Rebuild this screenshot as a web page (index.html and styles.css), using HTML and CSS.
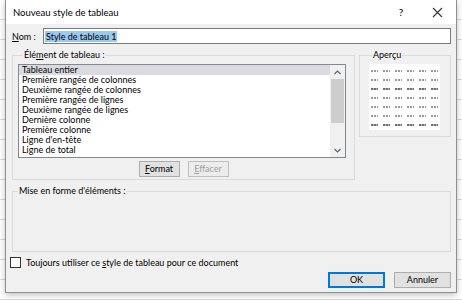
FILE: index.html
```html
<!DOCTYPE html>
<html lang="fr">
<head>
  <meta charset="UTF-8">
  <title>Nouveau style de tableau</title>
  <link rel="stylesheet" href="styles.css">
</head>
<body>

  <div class="dialog">
    <!-- Title bar -->
    <div class="titlebar">
      <span class="title">Nouveau style de tableau</span>
      <span class="help">?</span>
      <span class="close">
        <svg width="11" height="11" viewBox="0 0 11 11"><path d="M1 1 L10 10 M10 1 L1 10" stroke="#333" stroke-width="1.1" fill="none"/></svg>
      </span>
    </div>

    <div class="content">
      <!-- Name -->
      <div class="name-row">
        <span class="label"><u>N</u>om :</span>
        <div class="textbox"><span class="selected-text">Style de tableau 1</span></div>
      </div>

      <div class="top-row">
        <!-- Table elements -->
        <fieldset class="group elements">
          <legend>Élé<u>m</u>ent de tableau :</legend>
          <div class="listbox">
            <ul class="items" id="items"></ul>
            <div class="scrollbar">
              <svg class="arrow" width="7" height="5" viewBox="0 0 7 5"><path d="M0.5 4 L3.5 1 L6.5 4" stroke="#606060" stroke-width="1.1" fill="none"/></svg>
              <div class="thumb"></div>
              <svg class="arrow down" width="7" height="5" viewBox="0 0 7 5"><path d="M0.5 1 L3.5 4 L6.5 1" stroke="#606060" stroke-width="1.1" fill="none"/></svg>
            </div>
          </div>
          <div class="list-buttons">
            <button class="btn"><u>F</u>ormat</button>
            <button class="btn disabled"><u>E</u>ffacer</button>
          </div>
        </fieldset>

        <!-- Preview -->
        <fieldset class="group preview">
          <legend>Aperçu</legend>
          <div class="preview-box" id="preview"></div>
        </fieldset>
      </div>

      <fieldset class="group formatting">
        <legend>Mise en forme d'éléments :</legend>
      </fieldset>

      <label class="check">
        <span class="checkbox"></span>
        <span>Toujours utiliser ce <u>s</u>tyle de tableau pour ce document</span>
      </label>

      <div class="actions">
        <button class="btn default">OK</button>
        <button class="btn">Annuler</button>
      </div>
    </div>
  </div>

  <script>
    const items = [
      'Tableau entier',
      'Première rangée de colonnes',
      'Deuxième rangée de colonnes',
      'Première rangée de lignes',
      'Deuxième rangée de lignes',
      'Dernière colonne',
      'Première colonne',
      "Ligne d'en-tête",
      'Ligne de total'
    ];

    const list = document.getElementById('items');
    items.forEach((name, index) => {
      const li = document.createElement('li');
      li.textContent = name;
      if (index === 0) li.className = 'active';
      list.appendChild(li);
    });

    // 7 rows x 6 columns of sample cells
    const preview = document.getElementById('preview');
    for (let r = 0; r < 7; r++) {
      for (let c = 0; c < 6; c++) {
        const cell = document.createElement('span');
        cell.className = (r === 2 || r === 6) ? 'cell solid' : 'cell';
        preview.appendChild(cell);
      }
    }
  </script>
</body>
</html>
```

FILE: styles.css
```css
body {
  margin: 0;
  padding: 0;
  height: 300px;
  overflow: hidden;
  font-family: Lato, 'Noto Sans', sans-serif;
  font-size: 9px;
  color: #000;
  background-color: #fff;
  background-image: repeating-linear-gradient(to bottom, transparent 0, transparent 19px, #d8d8d8 19px, #d8d8d8 20px);
}

.dialog {
  width: 450px;
  height: 292px;
  margin-left: 5px;
  border: 1px solid #8f8f8f;
  border-top: none;
  background-color: #f0f0f0;
  box-shadow: 0 2px 6px rgba(0, 0, 0, 0.25);
  display: flex;
  flex-direction: column;
}

.titlebar {
  height: 24px;
  background-color: #fff;
  display: flex;
  align-items: center;
  padding-left: 7px;
}

.title {
  flex: 1;
  font-size: 9.5px;
}

.help {
  width: 34px;
  text-align: center;
  font-size: 10px;
  margin-left: 4px;
}

.close {
  width: 38px;
  display: flex;
  justify-content: center;
}

.content {
  flex: 1;
  padding: 4px 5px 0 6px;
  display: flex;
  flex-direction: column;
}

u {
  text-decoration-thickness: 1px;
  text-underline-offset: 1px;
}

.name-row {
  display: flex;
  align-items: center;
  height: 16px;
}

.name-row .label {
  width: 31px;
}

.textbox {
  flex: 1;
  height: 14px;
  border: 1px solid #7a7a7a;
  background-color: #fff;
  display: flex;
  align-items: center;
  padding-left: 1px;
}

.selected-text {
  background-color: #99c9ef;
  line-height: 11px;
  padding: 0 1px;
}

.top-row {
  display: flex;
  gap: 4px;
  margin-top: 6px;
}

.group {
  margin: 0;
  padding: 0;
  border: 1px solid #dcdcdc;
}

.group legend {
  padding: 0 1px;
  margin-left: 5px;
  line-height: 10px;
}

.elements {
  width: 343px;
  height: 130px;
  padding: 4px 0 0 5px;
  box-sizing: border-box;
}

.listbox {
  width: 326px;
  height: 92px;
  border: 1px solid #828790;
  background-color: #fff;
  display: flex;
}

.items {
  list-style: none;
  margin: 0;
  padding: 0;
  flex: 1;
}

.items li {
  height: 10px;
  line-height: 10px;
  padding-left: 3px;
}

.items li.active {
  background-color: #dadbe0;
}

.scrollbar {
  width: 15px;
  background-color: #f0f0f0;
  display: flex;
  flex-direction: column;
  align-items: center;
}

.arrow {
  margin: 5px 0 4px;
}

.arrow.down {
  margin-top: auto;
}

.thumb {
  width: 13px;
  height: 44px;
  background-color: #cdcdcd;
}

.list-buttons {
  display: flex;
  justify-content: center;
  gap: 8px;
  margin-top: 3px;
  padding-right: 5px;
}

.btn {
  font-family: inherit;
  font-size: 9px;
  color: #000;
  height: 16px;
  padding: 0;
  border: 1px solid #adadad;
  background-color: #e1e1e1;
  line-height: 12px;
}

.list-buttons .btn {
  width: 41px;
}

.btn.disabled {
  color: #a0a0a0;
  border-color: #bfbfbf;
  background-color: #ececec;
}

.preview {
  width: 92px;
  height: 87px;
  box-sizing: border-box;
  padding: 4px 0 0 9px;
}

.preview legend {
  margin-left: 3px;
}

.preview-box {
  width: 71px;
  height: 66px;
  background-color: #fff;
  display: grid;
  grid-template-columns: repeat(6, 12px);
  grid-auto-rows: 9px;
  padding: 1px 0 0 0;
  box-sizing: border-box;
  justify-content: center;
  align-content: center;
}

.cell {
  align-self: center;
  justify-self: center;
  width: 7px;
  height: 2px;
  background-image: repeating-linear-gradient(to right, #9a9a9a 0, #9a9a9a 2px, transparent 2px, transparent 3px);
}

.cell.solid {
  background-image: repeating-linear-gradient(to right, #707070 0, #707070 2px, #b0b0b0 2px, #b0b0b0 3px);
}

.formatting {
  margin-top: 6px;
  height: 66px;
  box-sizing: border-box;
}

.check {
  display: flex;
  align-items: center;
  gap: 5px;
  margin: 5px 0 0 -2px;
}

.checkbox {
  width: 9px;
  height: 9px;
  border: 1px solid #333;
  background-color: #fff;
}

.actions {
  display: flex;
  justify-content: flex-end;
  gap: 9px;
  margin-top: 4px;
}

.actions .btn {
  width: 57px;
}

.btn.default {
  border: 1px solid #0078d7;
  box-shadow: inset 0 0 0 1px #0078d7;
}
```
